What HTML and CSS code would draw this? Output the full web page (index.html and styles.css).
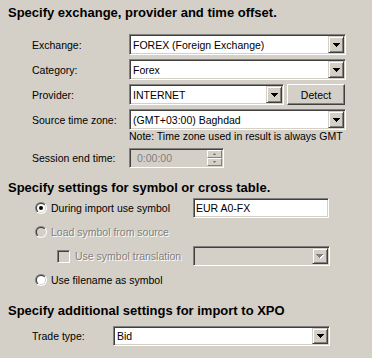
FILE: index.html
```html
<!DOCTYPE html>
<html>
<head>
<meta charset="utf-8">
<link rel="stylesheet" href="styles.css">
</head>
<body>
<svg class="defs" width="0" height="0" aria-hidden="true">
  <defs>
    <linearGradient id="ro" x1="0" y1="0" x2="1" y2="1"><stop offset="0.5" stop-color="#808080"/><stop offset="0.5" stop-color="#ffffff"/></linearGradient>
    <linearGradient id="ri" x1="0" y1="0" x2="1" y2="1"><stop offset="0.5" stop-color="#404040"/><stop offset="0.5" stop-color="#d4d0c8"/></linearGradient>
  </defs>
</svg>
<div class="dialog">
  <div class="title t1">Specify exchange, provider and time offset.</div>
  <div class="group">
    <div class="row">
      <span class="lbl">Exchange:</span>
      <div class="combo w-full"><span class="val">FOREX (Foreign Exchange)</span><span class="dd"><svg width="7" height="4"><rect x="0" y="0" width="7" height="1"/><rect x="1" y="1" width="5" height="1"/><rect x="2" y="2" width="3" height="1"/><rect x="3" y="3" width="1" height="1"/></svg></span></div>
    </div>
    <div class="row">
      <span class="lbl">Category:</span>
      <div class="combo w-full"><span class="val">Forex</span><span class="dd"><svg width="7" height="4"><rect x="0" y="0" width="7" height="1"/><rect x="1" y="1" width="5" height="1"/><rect x="2" y="2" width="3" height="1"/><rect x="3" y="3" width="1" height="1"/></svg></span></div>
    </div>
    <div class="row">
      <span class="lbl">Provider:</span>
      <div class="combo w-prov"><span class="val">INTERNET</span><span class="dd"><svg width="7" height="4"><rect x="0" y="0" width="7" height="1"/><rect x="1" y="1" width="5" height="1"/><rect x="2" y="2" width="3" height="1"/><rect x="3" y="3" width="1" height="1"/></svg></span></div>
      <span class="btn detect">Detect</span>
    </div>
    <div class="row row-last">
      <span class="lbl">Source time zone:</span>
      <div class="combo w-full"><span class="val">(GMT+03:00) Baghdad</span><span class="dd"><svg width="7" height="4"><rect x="0" y="0" width="7" height="1"/><rect x="1" y="1" width="5" height="1"/><rect x="2" y="2" width="3" height="1"/><rect x="3" y="3" width="1" height="1"/></svg></span></div>
    </div>
    <div class="note">Note: Time zone used in result is always GMT</div>
    <div class="row row-session">
      <span class="lbl">Session end time:</span>
      <div class="spin">
        <span class="spin-val">0:00:00</span>
        <span class="spin-btns">
          <span class="sb"><svg width="5" height="3"><rect x="2" y="0" width="1" height="1"/><rect x="1" y="1" width="3" height="1"/></svg></span>
          <span class="sb"><svg width="5" height="3"><rect x="1" y="0" width="3" height="1"/><rect x="2" y="1" width="1" height="1"/></svg></span>
        </span>
      </div>
    </div>
  </div>

  <div class="title t2">Specify settings for symbol or cross table.</div>
  <div class="group radios">
    <div class="rrow">
      <span class="ropt">
        <svg class="radio" width="12" height="12"><circle cx="6" cy="6" r="6" fill="url(#ro)"/><circle cx="6" cy="6" r="5" fill="url(#ri)"/><circle cx="6" cy="6" r="4" fill="#fff"/><circle cx="6" cy="6" r="2" fill="#000"/></svg>
        <span>During import use symbol</span>
      </span>
      <div class="edit w-sym"><span class="val">EUR A0-FX</span></div>
    </div>
    <div class="rrow">
      <span class="ropt disabled">
        <svg class="radio" width="12" height="12"><circle cx="6" cy="6" r="6" fill="url(#ro)"/><circle cx="6" cy="6" r="5" fill="url(#ri)"/><circle cx="6" cy="6" r="4" fill="#d4d0c8"/></svg>
        <span>Load symbol from source</span>
      </span>
    </div>
    <div class="rrow crow">
      <span class="copt disabled">
        <span class="check"></span>
        <span>Use symbol translation</span>
      </span>
      <div class="combo dis w-sym2"><span class="val"></span><span class="dd"><svg width="8" height="5"><g fill="#fff"><rect x="1" y="1" width="7" height="1"/><rect x="2" y="2" width="5" height="1"/><rect x="3" y="3" width="3" height="1"/><rect x="4" y="4" width="1" height="1"/></g><g fill="#808080"><rect x="0" y="0" width="7" height="1"/><rect x="1" y="1" width="5" height="1"/><rect x="2" y="2" width="3" height="1"/><rect x="3" y="3" width="1" height="1"/></g></svg></span></div>
    </div>
    <div class="rrow rrow-last">
      <span class="ropt">
        <svg class="radio" width="12" height="12"><circle cx="6" cy="6" r="6" fill="url(#ro)"/><circle cx="6" cy="6" r="5" fill="url(#ri)"/><circle cx="6" cy="6" r="4" fill="#fff"/></svg>
        <span>Use filename as symbol</span>
      </span>
    </div>
  </div>

  <div class="title t3">Specify additional settings for import to XPO</div>
  <div class="group">
    <div class="row row-trade">
      <span class="lbl lbl-trade">Trade type:</span>
      <div class="combo w-trade"><span class="val">Bid</span><span class="dd"><svg width="7" height="4"><rect x="0" y="0" width="7" height="1"/><rect x="1" y="1" width="5" height="1"/><rect x="2" y="2" width="3" height="1"/><rect x="3" y="3" width="1" height="1"/></svg></span></div>
    </div>
  </div>
</div>
</body>
</html>
```

FILE: styles.css
```css
html, body {
  margin: 0;
  padding: 0;
}
body {
  width: 372px;
  height: 358px;
  overflow: hidden;
  background: #d4d0c8;
  font-family: "Liberation Sans", Arial, sans-serif;
  font-size: 10.5px;
  color: #000;
}
.defs {
  display: block;
  width: 0;
  height: 0;
}
.dialog {
  padding-top: 5px;
}
.title {
  padding-left: 8px;
  font-size: 13px;
  font-weight: bold;
  line-height: 15px;
  height: 15px;
}
.t1 { margin-bottom: 14px; }
.t2 { margin-top: 12px; margin-bottom: 3px; }
.t3 { margin-top: 13px; margin-bottom: 8px; }

.row {
  display: flex;
  align-items: center;
  height: 21px;
  margin-bottom: 4px;
  padding-left: 32px;
}
.row-last { margin-bottom: 0; }
.lbl {
  width: 97px;
  flex: none;
}
.lbl-trade { width: 81px; }
.row-session { height: 20px; margin-top: 5px; margin-bottom: 0; }
.row-trade { height: 20px; margin-bottom: 0; }

.combo, .edit, .spin {
  box-sizing: border-box;
  height: 100%;
  display: flex;
  align-items: stretch;
  background: #fff;
  border: 1px solid;
  border-color: #808080 #fff #fff #808080;
  box-shadow: inset 1px 1px 0 #404040, inset -1px -1px 0 #d4d0c8;
  padding: 1px;
  flex: none;
}
.combo.dis { background: #d4d0c8; }
.val {
  flex: 1;
  display: flex;
  align-items: center;
  padding-left: 2px;
  white-space: nowrap;
  overflow: hidden;
}
.edit .val { padding-left: 1px; }
.w-full { width: 217px; }
.w-prov { width: 155px; }
.w-trade { width: 217px; }
.w-sym { width: 136px; height: 20px; }
.w-sym2 { width: 137px; height: 20px; }

.dd {
  box-sizing: border-box;
  width: 16px;
  flex: none;
  display: flex;
  align-items: center;
  justify-content: center;
  background: #d4d0c8;
  border: 1px solid;
  border-color: #d4d0c8 #404040 #404040 #d4d0c8;
  box-shadow: inset 1px 1px 0 #fff, inset -1px -1px 0 #808080;
}
.dd svg { display: block; fill: #000; }

.btn {
  box-sizing: border-box;
  display: flex;
  align-items: center;
  justify-content: center;
  background: #d4d0c8;
  border: 1px solid;
  border-color: #fff #404040 #404040 #fff;
  box-shadow: inset -1px -1px 0 #808080;
}
.detect {
  width: 58px;
  height: 21px;
  margin-left: 3px;
}

.note {
  padding-left: 129px;
  line-height: 13px;
  height: 13px;
}

.spin {
  width: 95px;
  background: #d4d0c8;
}
.spin-val {
  flex: 1;
  display: flex;
  align-items: center;
  padding-left: 6px;
  color: #808080;
}
.spin-btns {
  width: 15px;
  display: flex;
  flex-direction: column;
}
.sb {
  flex: 1;
  box-sizing: border-box;
  display: flex;
  align-items: center;
  justify-content: center;
  background: #d4d0c8;
  border: 1px solid;
  border-color: #fff #808080 #808080 #fff;
}
.sb svg { display: block; fill: #808080; }

.radios {
  padding-left: 35px;
}
.rrow {
  display: flex;
  align-items: center;
  height: 20px;
  margin-bottom: 4px;
}
.rrow-last { margin-bottom: 0; }
.ropt {
  width: 158px;
  display: flex;
  align-items: center;
  gap: 4px;
  flex: none;
}
.radio { display: block; flex: none; }
.crow { padding-left: 22px; }
.copt {
  width: 136px;
  display: flex;
  align-items: center;
  gap: 5px;
  flex: none;
}
.check {
  box-sizing: border-box;
  width: 13px;
  height: 13px;
  flex: none;
  background: #d4d0c8;
  border: 1px solid;
  border-color: #808080 #fff #fff #808080;
  box-shadow: inset 1px 1px 0 #404040, inset -1px -1px 0 #d4d0c8;
}
.disabled {
  color: #808080;
  text-shadow: 1px 1px 0 #fff;
}
```
